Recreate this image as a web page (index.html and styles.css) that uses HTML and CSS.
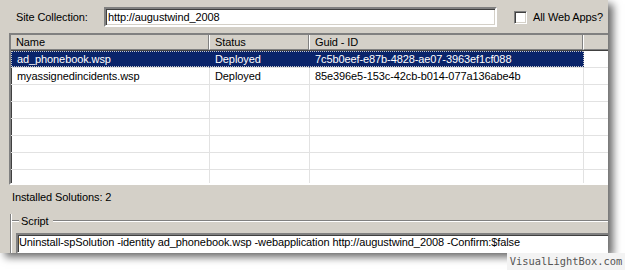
FILE: index.html
```html
<!DOCTYPE html>
<html>
<head>
<meta charset="utf-8">
<link rel="stylesheet" href="styles.css">
</head>
<body>
<div class="win">
  <div class="top">
    <span class="lbl">Site Collection:</span>
    <div class="input">http://augustwind_2008</div>
    <span class="chk"></span>
    <span class="chk-lbl">All Web Apps?</span>
  </div>
  <div class="list">
    <div class="row head">
      <div class="hc">Name</div>
      <div class="hc">Status</div>
      <div class="hc">Guid - ID</div>
      <div class="hc last"></div>
    </div>
    <div class="row sel">
      <div class="c">ad_phonebook.wsp</div>
      <div class="c">Deployed</div>
      <div class="c">7c5b0eef-e87b-4828-ae07-3963ef1cf088</div>
      <div class="c"></div>
    </div>
    <div class="row">
      <div class="c">myassignedincidents.wsp</div>
      <div class="c">Deployed</div>
      <div class="c">85e396e5-153c-42cb-b014-077a136abe4b</div>
      <div class="c"></div>
    </div>
    <div class="row"><div class="c"></div><div class="c"></div><div class="c"></div><div class="c"></div></div>
    <div class="row"><div class="c"></div><div class="c"></div><div class="c"></div><div class="c"></div></div>
    <div class="row"><div class="c"></div><div class="c"></div><div class="c"></div><div class="c"></div></div>
    <div class="row"><div class="c"></div><div class="c"></div><div class="c"></div><div class="c"></div></div>
    <div class="row"><div class="c"></div><div class="c"></div><div class="c"></div><div class="c"></div></div>
    <div class="row"><div class="c"></div><div class="c"></div><div class="c"></div><div class="c"></div></div>
  </div>
  <div class="count">Installed Solutions: 2</div>
  <div class="group">
    <div class="ghead"><span class="gtitle">Script</span></div>
    <div class="script">Uninstall-spSolution -identity ad_phonebook.wsp -webapplication http://augustwind_2008 -Confirm:$false</div>
  </div>
</div>
<div class="mark">VisualLightBox.com</div>
</body>
</html>
```

FILE: styles.css
```css
html, body {
  margin: 0;
  padding: 0;
  width: 625px;
  height: 270px;
  background: #ffffff;
  overflow: hidden;
}
body {
  position: relative;
  font-family: "Liberation Sans", Arial, sans-serif;
  font-size: 11px;
  letter-spacing: -0.1px;
  color: #000;
}
.win {
  width: 608px;
  height: 253px;
  background: #d4d0c8;
  overflow: hidden;
  box-shadow: 5px 4px 8px rgba(0, 0, 0, 0.6);
}
.top {
  display: flex;
  align-items: center;
  height: 20px;
  margin-top: 7px;
  padding-left: 16px;
}
.lbl {
  width: 88px;
  flex: none;
}
.input {
  width: 393px;
  height: 20px;
  box-sizing: border-box;
  background: #fff;
  border-style: solid;
  border-width: 2px;
  border-color: #808080 #ffffff #ffffff #808080;
  box-shadow: inset 1px 1px 0 #404040, inset -1px -1px 0 #d4d0c8;
  padding: 0 2px;
  line-height: 16px;
  flex: none;
}
.chk {
  width: 13px;
  height: 13px;
  box-sizing: border-box;
  background: #fff;
  border-style: solid;
  border-width: 1px;
  border-color: #808080 #ffffff #ffffff #808080;
  box-shadow: inset 1px 1px 0 #404040, inset -1px -1px 0 #d4d0c8;
  margin-left: 17px;
  flex: none;
}
.chk-lbl {
  margin-left: 6px;
  white-space: nowrap;
}
.list {
  margin: 6px 0 0 9px;
  width: 610px;
  height: 152px;
  box-sizing: border-box;
  background: #fff;
  border-style: solid;
  border-width: 2px 0 2px 2px;
  border-color: #808080 #fff #ffffff #808080;
  box-shadow: inset 1px 1px 0 #404040;
  overflow: hidden;
}
.row {
  display: grid;
  grid-template-columns: 199px 100px 274px 1fr;
  height: 17px;
  white-space: nowrap;
}
.row.head {
  height: 16px;
  margin-left: -1px;
  margin-top: -1px;
}
.hc {
  background: #d4d0c8;
  border-style: solid;
  border-width: 1px;
  border-color: #ffffff #808080 #808080 #ffffff;
  box-shadow: 1px 1px 0 #404040;
  padding-left: 5px;
  line-height: 14px;
  overflow: hidden;
}
.c {
  border-right: 1px solid #e2e2e2;
  border-bottom: 1px solid #e2e2e2;
  padding-left: 5px;
  line-height: 16px;
  overflow: hidden;
}
.row .c:first-child {
  padding-left: 6px;
}
.row.head + .row {
  margin-top: 1px;
}
.row.sel .c {
  background: #0a246a;
  color: #fff;
  border-right-color: #0a246a;
  border-bottom-color: #e2e2e2;
  background-image:
    repeating-linear-gradient(90deg, #c8c8c8 0 1px, transparent 1px 2px),
    repeating-linear-gradient(90deg, #c8c8c8 0 1px, transparent 1px 2px);
  background-size: 100% 1px, 100% 1px;
  background-position: 0 0, 0 15px;
  background-repeat: no-repeat;
}
.row.sel .c:first-child {
  border-left: 1px dotted #c8c8c8;
  padding-left: 5px;
}
.row.sel .c:nth-child(3) {
  border-right: 1px dotted #c8c8c8;
}
.row.sel .c:last-child {
  background: #fff;
  color: #000;
  border-right-color: #e2e2e2;
}
.count {
  margin: 5px 0 0 12px;
  line-height: 14px;
}
.group {
  margin: 10px 0 0 10px;
  border-left: 1px solid #808080;
  box-shadow: inset 1px 0 0 #ffffff;
  height: 60px;
}
.ghead {
  display: flex;
  align-items: center;
  height: 14px;
}
.ghead::before,
.ghead::after {
  content: "";
  border-top: 1px solid #808080;
  border-bottom: 1px solid #ffffff;
  height: 0;
}
.ghead::before {
  width: 7px;
  margin-left: 1px;
}
.ghead::after {
  flex: 1;
}
.gtitle {
  padding: 0 4px 0 2px;
  line-height: 14px;
}
.script {
  margin: 5px 0 0 5px;
  width: 620px;
  height: 21px;
  box-sizing: border-box;
  background: #fff;
  border-style: solid;
  border-width: 2px 0 2px 2px;
  border-color: #808080 #fff #fff #808080;
  box-shadow: inset 1px 1px 0 #404040;
  padding-left: 1px;
  line-height: 14px;
  white-space: nowrap;
}
.mark {
  position: absolute;
  right: 0;
  bottom: 0;
  width: 118px;
  height: 17px;
  background: #f3f3f3;
  color: #555;
  font-family: "DejaVu Sans Mono", monospace;
  font-size: 10.4px;
  letter-spacing: 0;
  line-height: 17px;
  text-align: center;
}
```
